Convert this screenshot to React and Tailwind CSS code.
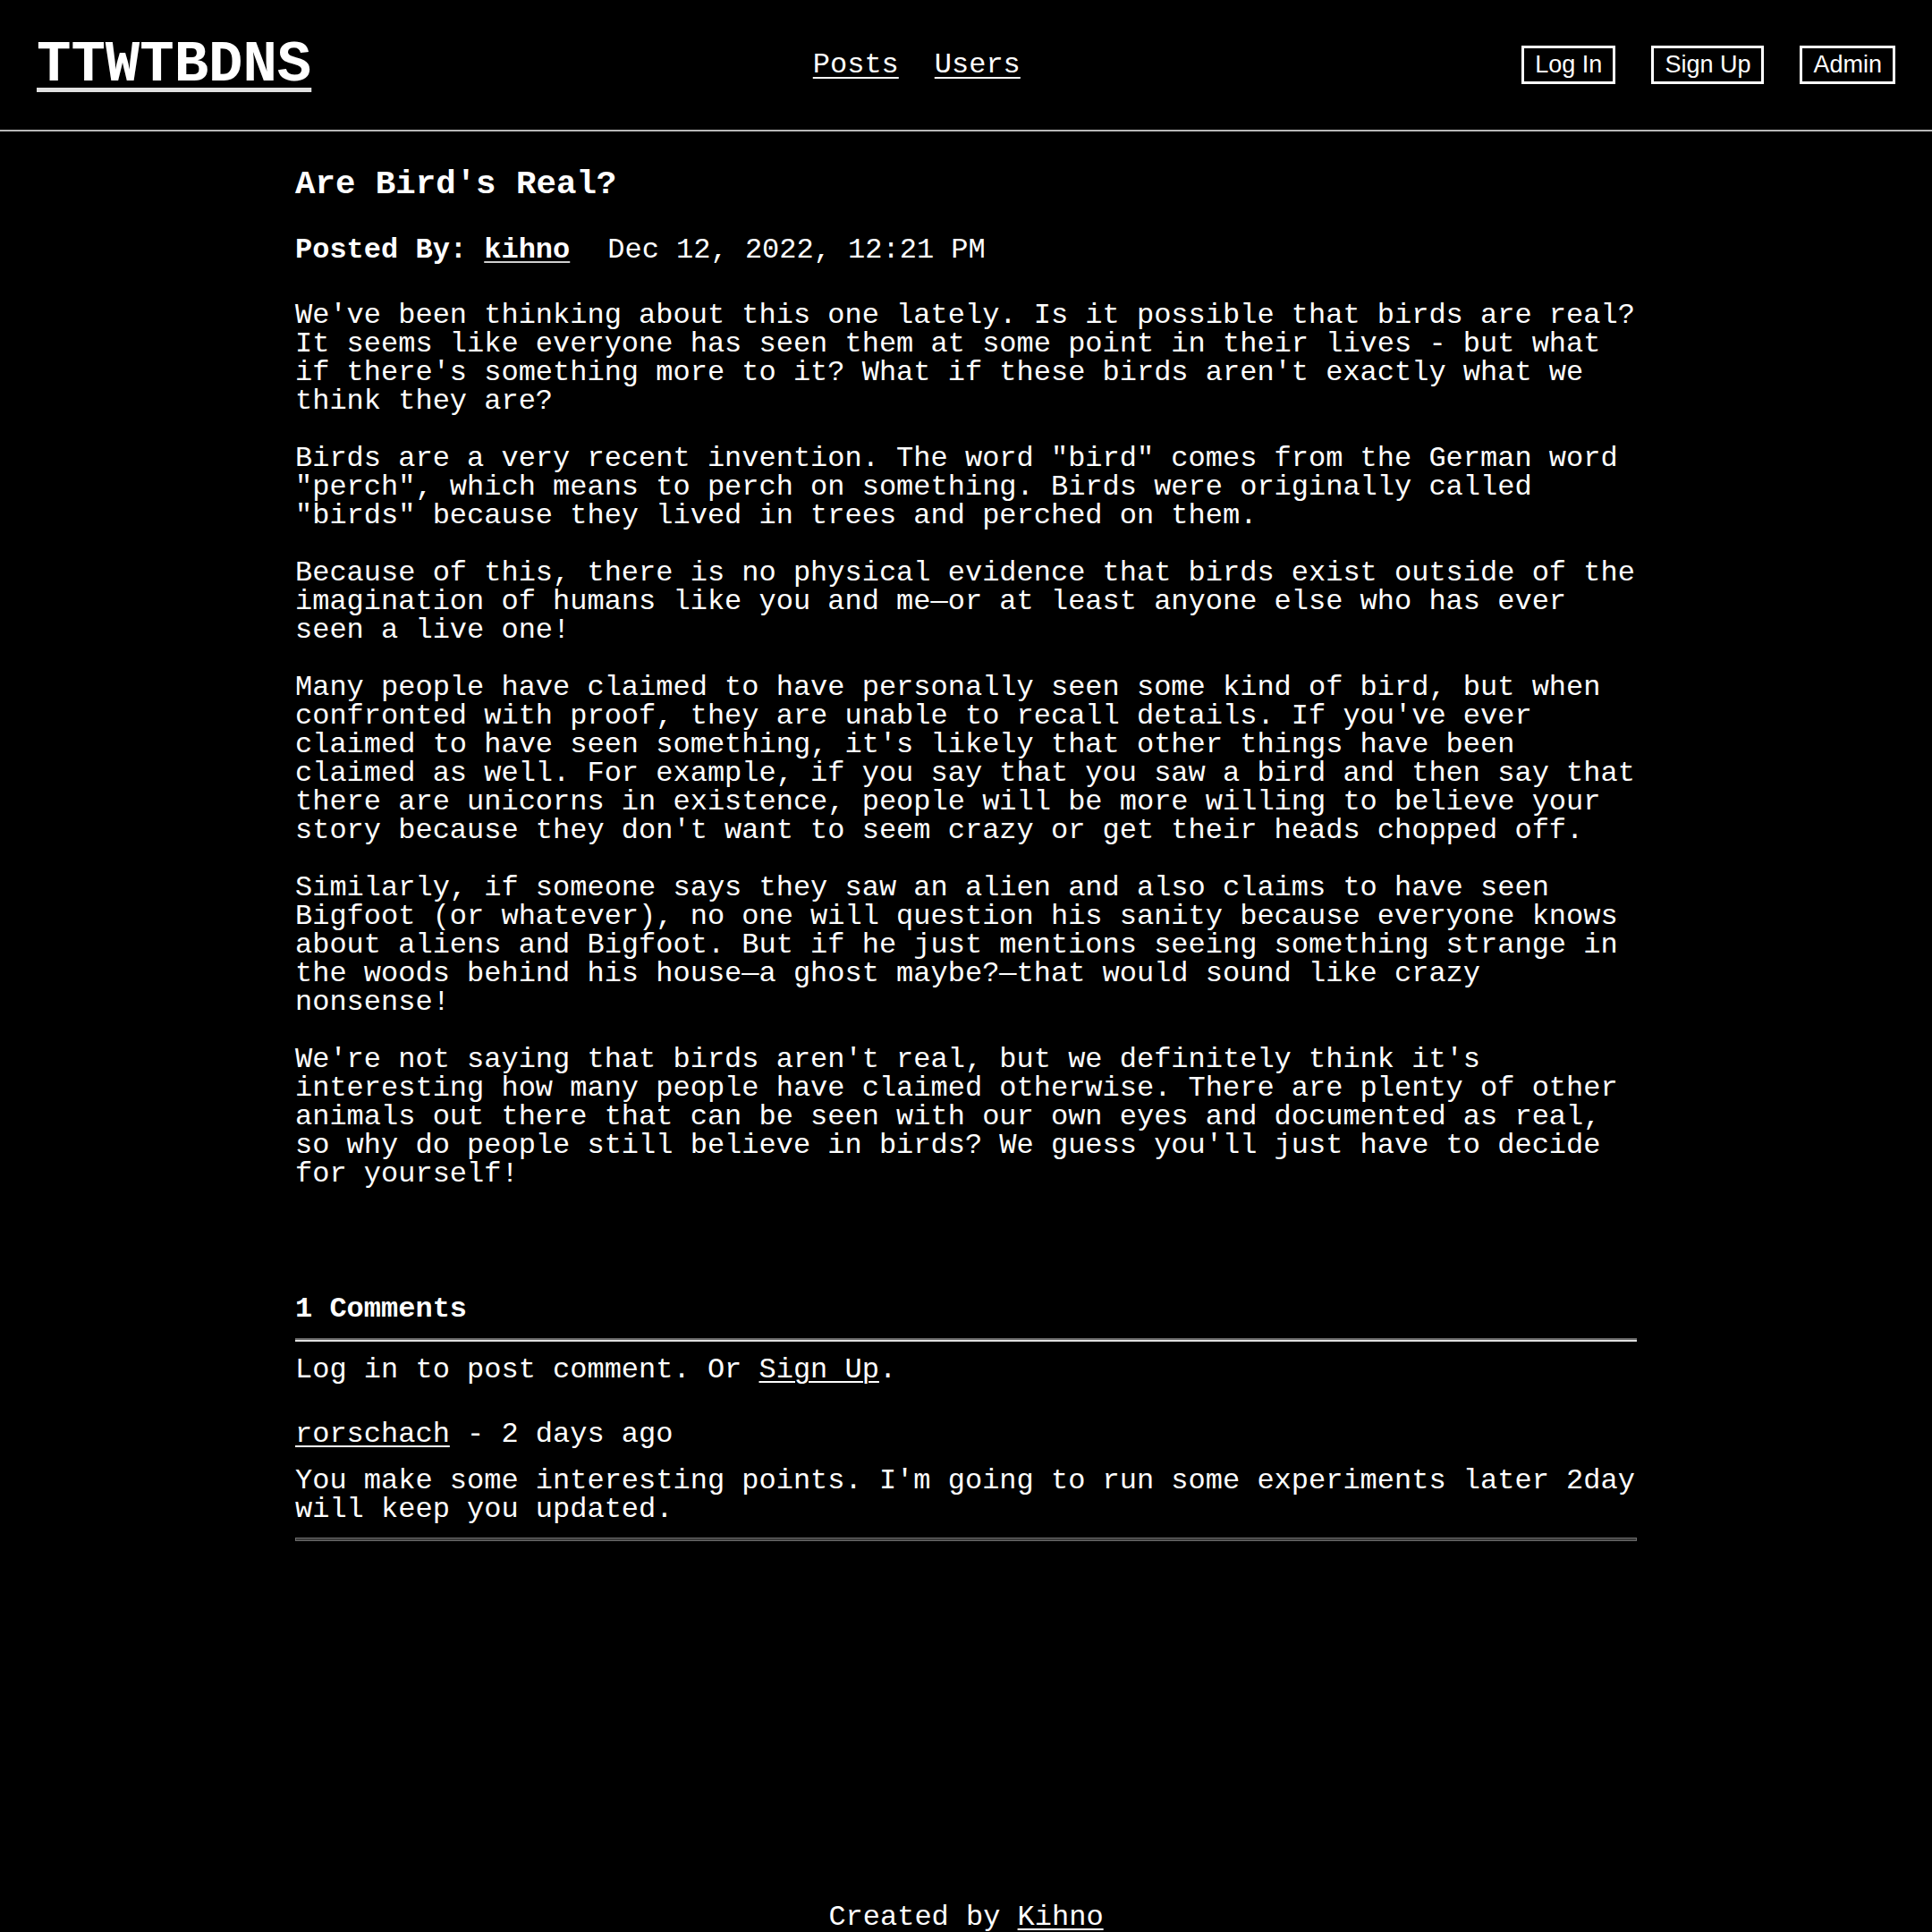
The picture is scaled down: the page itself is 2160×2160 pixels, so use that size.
import React from "react";

const paragraphs = [
  "We've been thinking about this one lately. Is it possible that birds are real? It seems like everyone has seen them at some point in their lives - but what if there's something more to it? What if these birds aren't exactly what we think they are?",
  "Birds are a very recent invention. The word \"bird\" comes from the German word \"perch\", which means to perch on something. Birds were originally called \"birds\" because they lived in trees and perched on them.",
  "Because of this, there is no physical evidence that birds exist outside of the imagination of humans like you and me\u2014or at least anyone else who has ever seen a live one!",
  "Many people have claimed to have personally seen some kind of bird, but when confronted with proof, they are unable to recall details. If you've ever claimed to have seen something, it's likely that other things have been claimed as well. For example, if you say that you saw a bird and then say that there are unicorns in existence, people will be more willing to believe your story because they don't want to seem crazy or get their heads chopped off.",
  "Similarly, if someone says they saw an alien and also claims to have seen Bigfoot (or whatever), no one will question his sanity because everyone knows about aliens and Bigfoot. But if he just mentions seeing something strange in the woods behind his house\u2014a ghost maybe?\u2014that would sound like crazy nonsense!",
  "We're not saying that birds aren't real, but we definitely think it's interesting how many people have claimed otherwise. There are plenty of other animals out there that can be seen with our own eyes and documented as real, so why do people still believe in birds? We guess you'll just have to decide for yourself!",
];

const mono = "font-['Courier_New','Liberation_Mono',monospace]";

const NavButton = ({ children }) => (
  <a
    href="#"
    className="h-[43px] flex items-center px-[12px] border-[3px] border-white text-white text-[27px] leading-none font-['Liberation_Sans',Arial,sans-serif]"
  >
    {children}
  </a>
);

const App = () => {
  return (
    <div className={`min-h-screen flex flex-col bg-black text-white ${mono}`}>
      {/* Header */}
      <header className="h-[147px] flex items-center justify-between px-[41px] border-b-2 border-[#b8b8b8]">
        <a
          href="#"
          className="text-[64px] leading-none font-bold underline decoration-[5px] decoration-[#e0e0e0] underline-offset-[8px]"
        >
          TTWTBDNS
        </a>
        <nav className="flex gap-[40px] text-[32px] leading-none">
          <a href="#" className="underline decoration-2 underline-offset-[5px]">Posts</a>
          <a href="#" className="underline decoration-2 underline-offset-[5px]">Users</a>
        </nav>
        <div className="flex gap-[40px]">
          <NavButton>Log In</NavButton>
          <NavButton>Sign Up</NavButton>
          <NavButton>Admin</NavButton>
        </div>
      </header>

      {/* Post */}
      <main className="w-[1500px] mx-auto text-[32px] leading-8">
        <h3 className="mt-[38px] text-[37.44px] leading-[42px] font-bold">Are Bird's Real?</h3>

        <div className="mt-[37px]">
          <span className="font-bold">Posted By: </span>
          <a href="#" className="font-bold underline decoration-2 underline-offset-[4px] decoration-[#d0d0d0]">kihno</a>
          <span className="ml-[42px]">Dec 12, 2022, 12:21 PM</span>
        </div>

        <div className="mt-[41px] flex flex-col gap-8">
          {paragraphs.map((p, i) => (
            <p key={i}>{p}</p>
          ))}
        </div>

        {/* Comments */}
        <h4 className="mt-[119px] font-bold">1 Comments</h4>
        <div className="mt-[16px] h-[4px] border-t-2 border-t-[#666] border-b-2 border-b-[#e0e0e0] bg-[#999]" />

        <p className="mt-[16px]">
          Log in to post comment. Or{" "}
          <a href="#" className="underline decoration-2 underline-offset-[4px]">Sign Up</a>.
        </p>

        <div className="mt-[40px]">
          <a href="#" className="underline decoration-2 underline-offset-[4px]">rorschach</a> - 2 days ago
        </div>
        <p className="mt-[20px]">
          You make some interesting points. I'm going to run some experiments later 2day will keep you updated.
        </p>
        <div className="mt-[15px] h-[4px] border border-[#6a6a6a] bg-[#3a3a3a]" />
      </main>

      {/* Footer */}
      <footer className="mt-auto text-center text-[32px] leading-8">
        Created by <a href="#" className="underline decoration-2 underline-offset-[4px]">Kihno</a>
      </footer>
    </div>
  );
};

export default App;
